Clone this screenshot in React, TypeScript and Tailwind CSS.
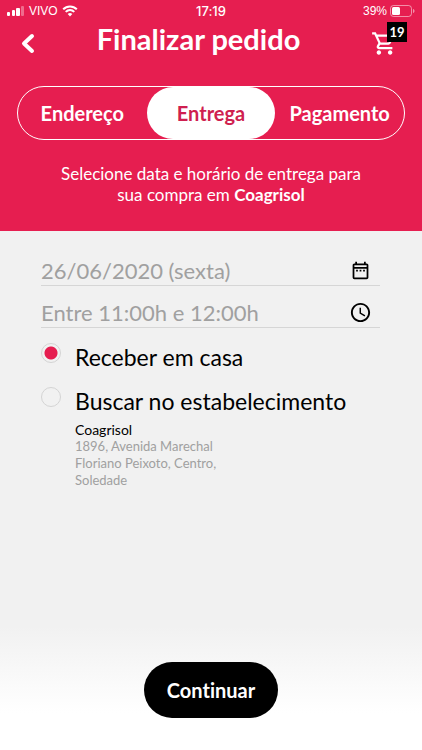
import React, { useState } from 'react';
import { MdAccessTime, MdOutlineDateRange, MdOutlineShoppingCart } from 'react-icons/md';

type DeliveryMode = 'home' | 'pickup';

const STEPS = ['Endereço', 'Entrega', 'Pagamento'];

const StatusBar: React.FC = () => (
  <div className="grid grid-cols-3 items-center h-[22px] px-[7px] text-[12px] leading-[22px] font-['Liberation_Sans',sans-serif]">
    <div className="flex items-center gap-1">
      <svg width="18" height="10" viewBox="0 0 18 10" fill="currentColor" aria-hidden="true">
        <rect x="0" y="6" width="3" height="4" rx="1" />
        <rect x="5" y="4" width="3" height="6" rx="1" />
        <rect x="9" y="2" width="4" height="8" rx="1" />
        <rect x="14" y="0" width="3" height="10" rx="1" opacity="0.35" />
      </svg>
      <span>VIVO</span>
      <svg width="16" height="12" viewBox="0 0 16 12" fill="none" stroke="currentColor" strokeWidth="2" aria-hidden="true">
        <path d="M1.2 4.3C5 .4 11 .4 14.800 4.300" />
        <path d="M3.700 6.900C6.200 4.500 9.800 4.500 12.300 6.900" />
        <path d="M8 11.500L5.700 9C7 7.800 9 7.800 10.300 9Z" fill="currentColor" stroke="none" />
      </svg>
    </div>
    <span className="text-center text-[13px] font-['Inter',sans-serif] font-medium">17:19</span>
    <div className="flex items-center justify-end gap-[3px]">
      <span>39%</span>
      <svg width="25" height="12" viewBox="0 0 25 12" fill="none" aria-hidden="true">
        <rect x="0.5" y="0.5" width="21" height="11" rx="3" stroke="currentColor" opacity="0.5" />
        <rect x="2" y="2" width="8" height="8" rx="1.500" fill="currentColor" />
        <path d="M23 4v4c1-.3 1.500-1 1.500-2S24 4.300 23 4Z" fill="currentColor" opacity="0.5" />
      </svg>
    </div>
  </div>
);

interface FieldProps {
  id: string;
  label: string;
  value: string;
  icon: React.ReactNode;
}

const Field: React.FC<FieldProps> = ({ id, label, value, icon }) => (
  <div className="flex items-end h-[42px] border-b border-[#d6d6d6]">
    <input
      id={id}
      aria-label={label}
      readOnly
      value={value}
      className="flex-1 min-w-0 h-7 bg-transparent text-[22px] leading-7 text-[#a0a0a0] outline-none"
    />
    <span className="flex items-center justify-center size-6 mr-2 mb-[3px] text-black">{icon}</span>
  </div>
);

interface OptionProps {
  id: DeliveryMode;
  label: string;
  checked: boolean;
  onSelect: (mode: DeliveryMode) => void;
}

const Option: React.FC<OptionProps> = ({ id, label, checked, onSelect }) => (
  <div className="flex items-start gap-[14px]">
    <input
      type="radio"
      id={id}
      name="delivery"
      checked={checked}
      onChange={() => onSelect(id)}
      className="size-5 shrink-0 appearance-none rounded-full border border-[#d4d4d4] bg-[#f1f1f1] checked:bg-[radial-gradient(circle,#e61e50_6px,#f1f1f1_7px)]"
    />
    <label htmlFor={id} className="text-[23px] leading-7 text-black">{label}</label>
  </div>
);

const App: React.FC = () => {
  const [mode, setMode] = useState<DeliveryMode>('home');

  return (
    <div className="min-h-screen flex flex-col bg-[#f1f1f1] font-['Lato',sans-serif] [font-variant-ligatures:none]">
      <header className="bg-[#e61e50] text-white pb-[26px]">
        <StatusBar />

        <div className="flex items-start h-10 pl-[18px] pr-[15px]">
          <button type="button" aria-label="Voltar" className="w-5 pt-2">
            <svg width="20" height="26" viewBox="0 0 20 26" fill="none" stroke="currentColor" strokeWidth="4" strokeLinecap="round" strokeLinejoin="round" aria-hidden="true">
              <path d="M14 6L6 13.500l8 7.500" />
            </svg>
          </button>
          <h1 className="flex-1 pr-3 text-center text-[29px] leading-[34px] font-bold">Finalizar pedido</h1>
          <button type="button" aria-label="Carrinho" className="relative w-9 pt-2">
            <MdOutlineShoppingCart size={27} />
            <span className="absolute top-0 right-0 size-5 bg-black text-[13px] leading-5 font-bold text-center">19</span>
          </button>
        </div>

        <nav className="grid grid-cols-3 mt-6 mx-[17px] h-[54px] rounded-full border border-white">
          {STEPS.map(step => (
            <button
              key={step}
              type="button"
              className={step === 'Entrega'
                ? 'rounded-full bg-white text-[#cf1f50] text-[20px] font-bold'
                : 'rounded-full text-[20px] font-bold'}
            >
              {step}
            </button>
          ))}
        </nav>

        <p className="mt-[23px] text-center text-[17px] leading-[21px]">
          Selecione data e horário de entrega para<br />
          sua compra em <strong className="font-bold">Coagrisol</strong>
        </p>
      </header>

      <main className="flex-1 pt-[13px] pl-[41px] pr-[42px]">
        <Field id="date" label="Data" value="26/06/2020 (sexta)" icon={<MdOutlineDateRange size={21} />} />
        <Field id="time" label="Horário" value="Entre 11:00h e 12:00h" icon={<MdAccessTime size={23} />} />

        <div className="mt-[15px] space-y-4">
          <Option id="home" label="Receber em casa" checked={mode === 'home'} onSelect={setMode} />
          <Option id="pickup" label="Buscar no estabelecimento" checked={mode === 'pickup'} onSelect={setMode} />
        </div>

        <address className="pl-[34px] mt-[6px] w-[200px] text-[13px] leading-[17px] not-italic text-[#a0a0a0]">
          <span className="block text-[14px] text-black">Coagrisol</span>
          1896, Avenida Marechal Floriano Peixoto, Centro, Soledade
        </address>
      </main>

      <footer className="flex justify-center pt-9 pb-8 bg-linear-to-b from-[#f1f1f1] to-white to-70%">
        <button type="button" className="h-14 px-[23px] rounded-full bg-black text-white text-[20px] font-bold">
          Continuar
        </button>
      </footer>
    </div>
  );
};

export default App;
